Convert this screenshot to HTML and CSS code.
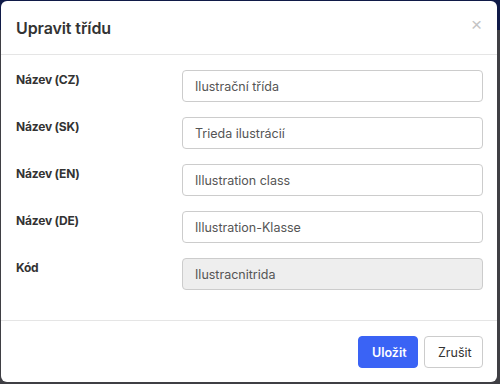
FILE: index.html
```html
<!DOCTYPE html>
<html lang="cs">
<head>
<meta charset="utf-8">
<link rel="stylesheet" href="styles.css">
</head>
<body>
<div class="backdrop">
  <div class="modal">
    <div class="modal-header">
      <h4 class="modal-title">Upravit třídu</h4>
      <span class="close">&times;</span>
    </div>
    <div class="modal-body">
      <div class="row">
        <label class="label">Název (CZ)</label>
        <div class="input">Ilustrační třída</div>
      </div>
      <div class="row">
        <label class="label">Název (SK)</label>
        <div class="input">Trieda ilustrácií</div>
      </div>
      <div class="row">
        <label class="label">Název (EN)</label>
        <div class="input">Illustration class</div>
      </div>
      <div class="row">
        <label class="label">Název (DE)</label>
        <div class="input">Illustration-Klasse</div>
      </div>
      <div class="row">
        <label class="label">Kód</label>
        <div class="input disabled">Ilustracnitrida</div>
      </div>
    </div>
    <div class="modal-footer">
      <button class="btn btn-primary">Uložit</button>
      <button class="btn btn-default">Zrušit</button>
    </div>
  </div>
</div>
</body>
</html>
```
FILE: styles.css
```css
html, body {
  margin: 0;
  padding: 0;
}
body {
  width: 500px;
  height: 384px;
  overflow: hidden;
  font-family: Inter, "Liberation Sans", sans-serif;
  background: linear-gradient(to bottom, #101a48 0, #101a48 30px, #3f3f44 30px, #3f3f44 100%);
}
.backdrop {
  padding: 1px 3px 2px 1px;
}
.modal {
  background: #fff;
  border-radius: 6px;
  height: 381px;
  display: flex;
  flex-direction: column;
}
.modal-header {
  height: 53px;
  border-bottom: 1px solid #e5e5e5;
  display: flex;
  align-items: center;
  justify-content: space-between;
  padding: 0 15px;
}
.modal-title {
  margin: 0;
  font-size: 16px;
  font-weight: 600;
  color: #333;
  letter-spacing: -0.1px;
  padding-top: 1px;
}
.close {
  font-size: 19px;
  color: #c4c4c4;
  line-height: 1;
  margin-top: -6px;
  margin-right: 0px;
  font-family: "Liberation Sans", Arial, sans-serif;
}
.modal-body {
  flex: 1;
  padding: 15px 15px 0 15px;
}
.row {
  display: grid;
  grid-template-columns: 166px 1fr;
  margin-bottom: 15px;
}
.label {
  font-size: 12px;
  font-weight: 700;
  color: #333;
  padding-top: 2px;
  letter-spacing: -0.2px;
}
.input {
  height: 30px;
  border: 1px solid #ccc;
  border-radius: 4px;
  box-sizing: content-box;
  padding: 0 12px;
  display: flex;
  align-items: center;
  font-size: 12.5px;
  color: #555;
  margin-right: -1px;
}
.input.disabled {
  background: #eee;
}
.modal-footer {
  border-top: 1px solid #e5e5e5;
  padding: 15px 14px 14px 15px;
  display: flex;
  justify-content: flex-end;
  gap: 6px;
}
.btn {
  height: 32px;
  border-radius: 4px;
  font-family: Inter, "Liberation Sans", sans-serif;
  font-size: 12.5px;
  padding: 0 13px;
  cursor: pointer;
}
.btn-primary {
  background: #3a63f5;
  border: 1px solid #3a63f5;
  color: #fff;
  font-weight: 600;
  width: 60px;
}
.btn-default {
  background: #fff;
  border: 1px solid #ccc;
  color: #333;
  width: 59px;
}
```
